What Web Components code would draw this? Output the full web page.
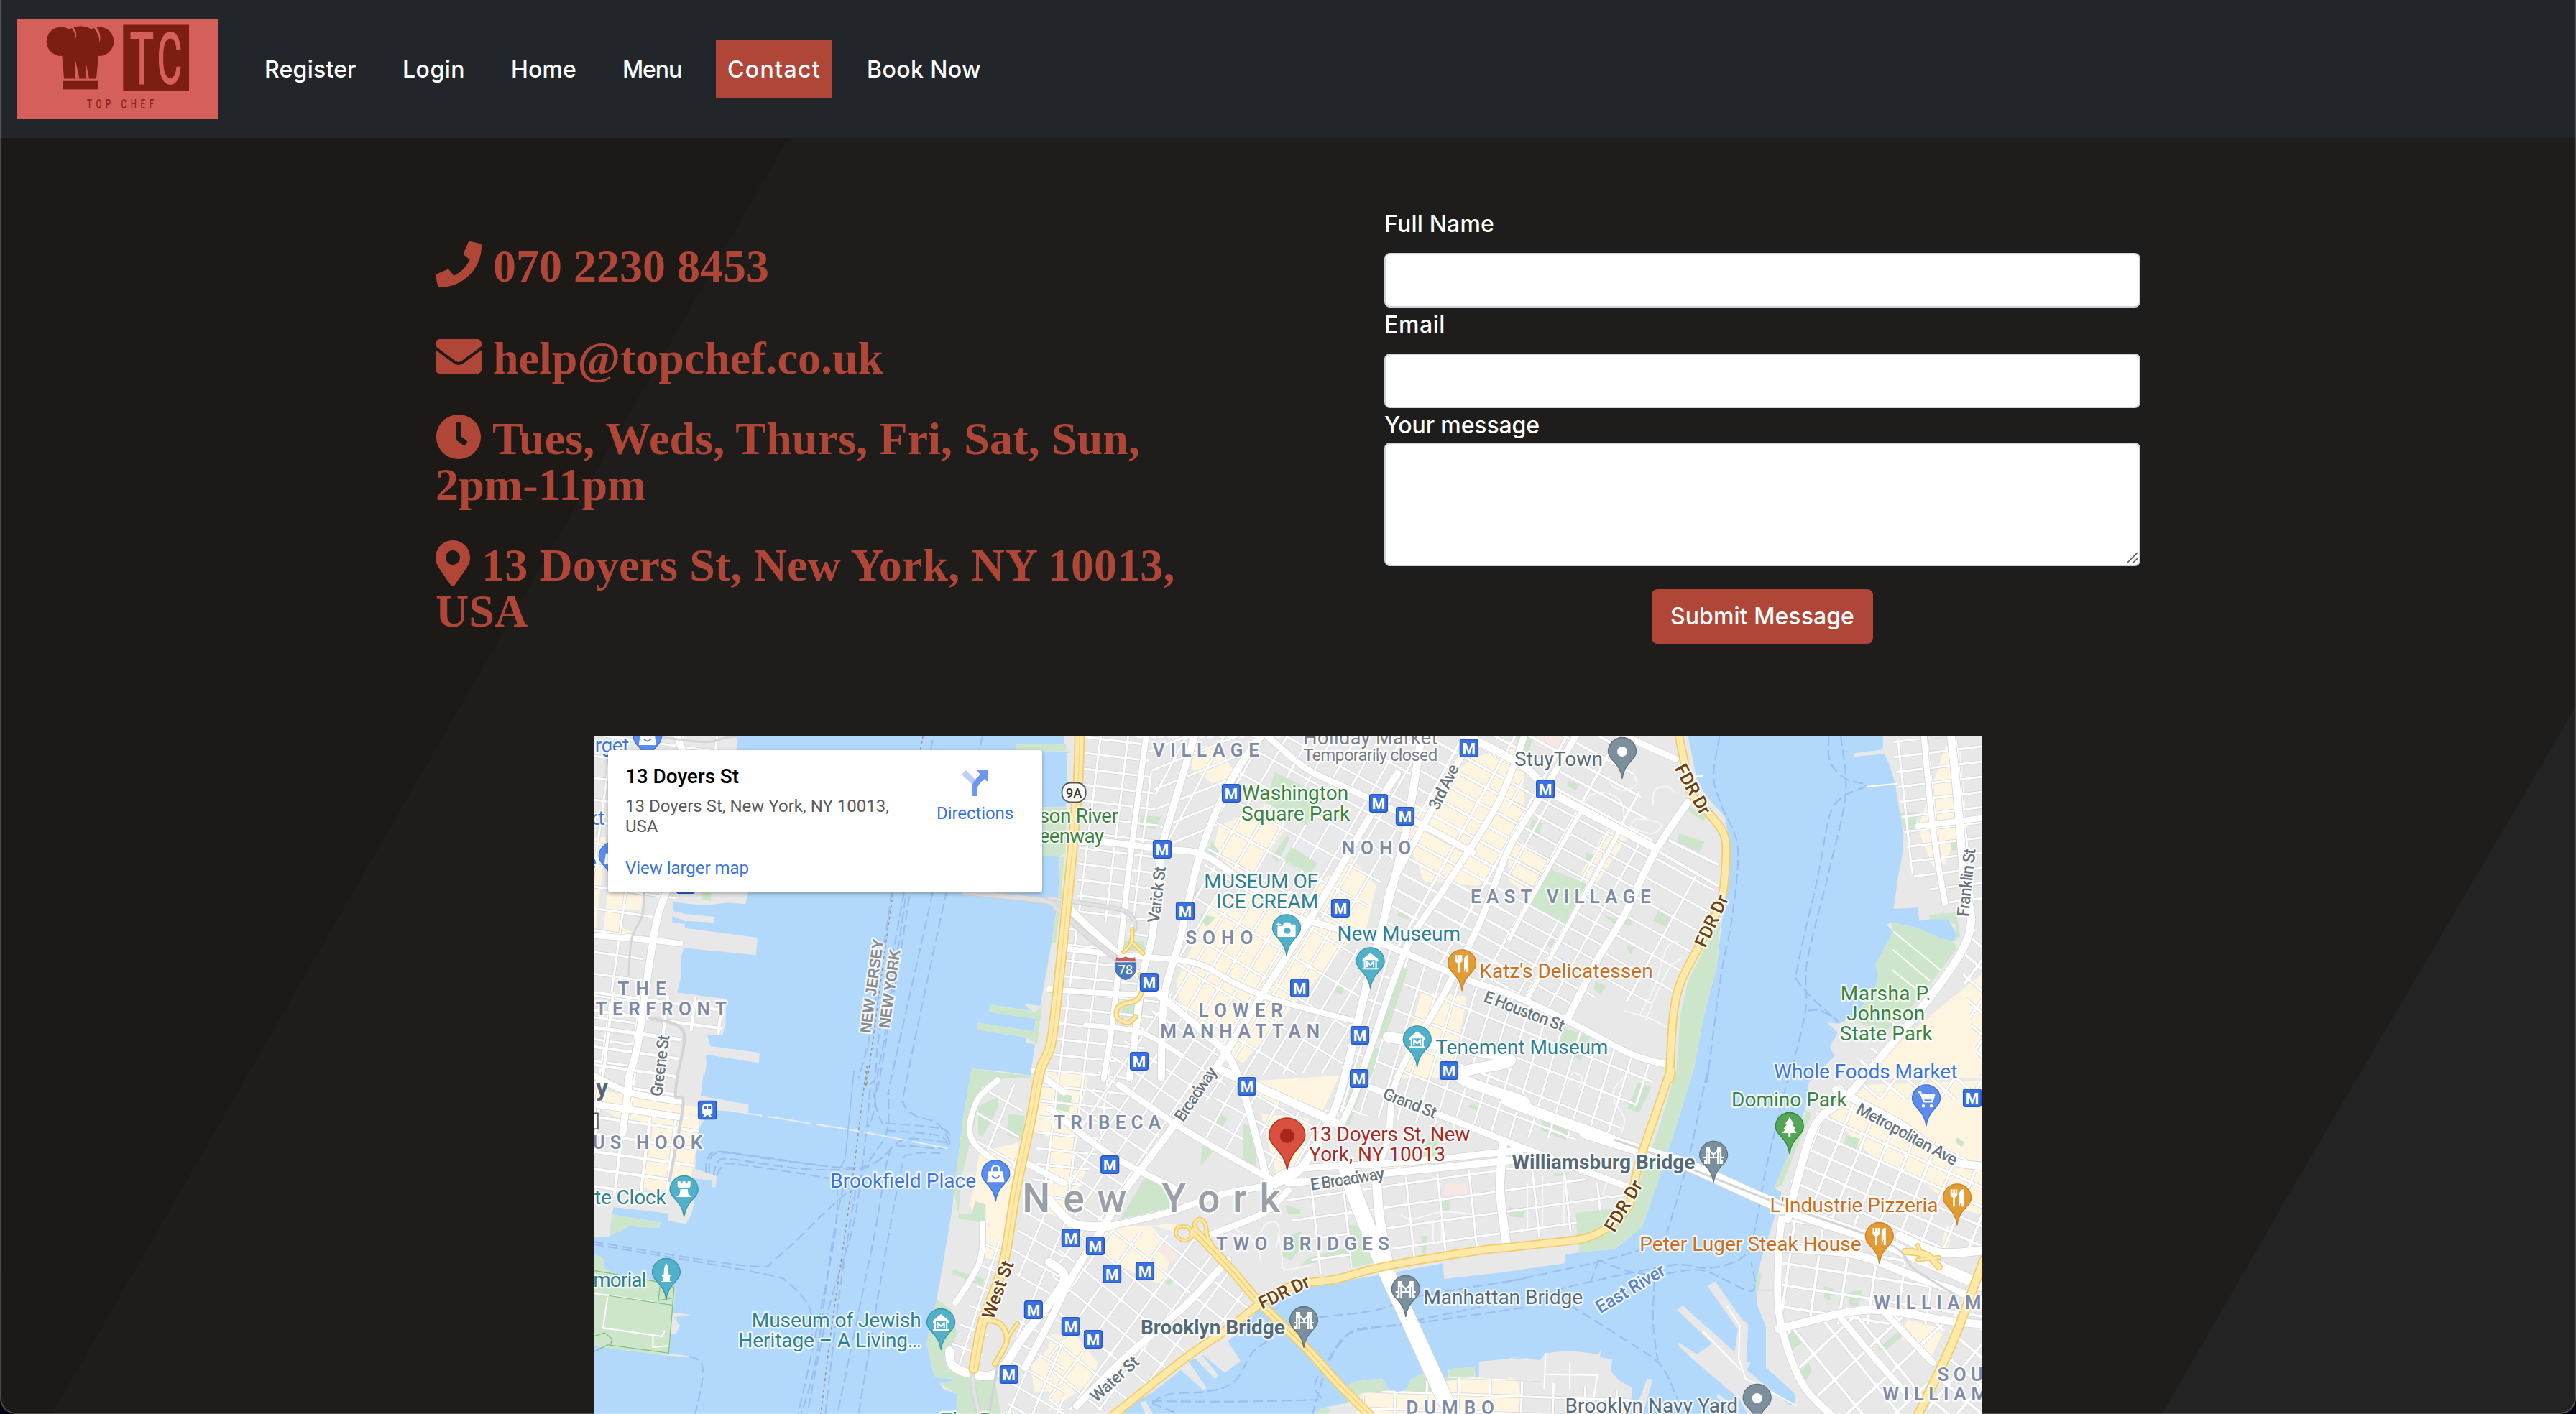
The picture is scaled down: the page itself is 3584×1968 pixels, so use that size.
<!DOCTYPE html>
<html lang="en">
<head>
<meta charset="utf-8">
<title>Top Chef - Contact</title>
<style>
html,body{margin:0;padding:0}
body{width:3584px;height:1968px;overflow:hidden;background:#05001a;font:500 32px/48px Inter,"Noto Sans",sans-serif;color:#fff}
</style>
</head>
<body>
<contact-page></contact-page>
<script>
const make=(tag,html,init)=>customElements.define(tag,class extends HTMLElement{
  connectedCallback(){
    if(this.shadowRoot)return;
    const r=this.attachShadow({mode:'open'});
    r.innerHTML=typeof html==='function'?html(this):html;
    if(init)init(this,r);
  }
});

/* Text whose tracking is adjusted so that it fills a given width */
make('fit-text','<style>:host{display:inline-block;white-space:nowrap}</style><span><slot></slot></span>',(el,r)=>{
  const s=r.querySelector('span'),w=s.getBoundingClientRect().width,n=el.textContent.length;
  s.style.letterSpacing=((+el.getAttribute('w')-w)/n)+'px';
  el.style.width=el.getAttribute('w')+'px';
});

make('brand-logo',`<style>:host{display:block;width:280px;height:140px;background:#d5605b}svg{display:block}</style>
<svg width="280" height="140" viewBox="24 26 280 140">
<g fill="#7d1e12"><circle cx="85" cy="57.700" r="20.300"/><circle cx="138" cy="57.700" r="20.300"/>
<path d="M84 44 L100 39 Q112 33.500 124 39 Q140 47 140 62 L137 78 L134 109.500 L89 109.500 L86.500 78 Z"/>
<rect x="87" y="112.700" width="49" height="11.700"/><rect x="171.300" y="34.500" width="91.700" height="91.500"/></g>
<g fill="#d5605b"><path d="M99.500 38.500Q105.500 46 105.300 55Q108 45 102.500 38Z"/><path d="M130 38Q138.500 48 138.800 60Q141.500 46 134 37.500Z"/><path d="M97 38.500L100.300 39.300L102 36.500L98 36Z"/>
<path d="M105 84V109.500H110.500Z"/><path d="M119.300 86V109.500H124Z"/></g>
<g fill="#d5605b" font-family="Roboto,sans-serif" font-weight="400" stroke="#d5605b" stroke-width="2"><text transform="translate(180.800 116.500) scale(.55 1)" font-size="101">T</text><text transform="translate(218.500 116) scale(.54 1)" font-size="99">C</text></g>
<text transform="translate(121 150.500) scale(.62 1)" font-family="Roboto,sans-serif" font-size="18.500" fill="#8d271d" textLength="150">TOP CHEF</text></svg>`);

make('nav-link',el=>`<style>:host{display:flex;justify-content:center;padding:17px 16px 15px;height:48px;box-sizing:content-box;background:${el.hasAttribute('active')?'#b04637':'transparent'};color:#fff}</style><slot></slot>`);

make('top-nav',`<style>:host{display:flex;align-items:center;height:192px;background:#22262b;padding-left:24px;box-sizing:border-box}
nav{display:flex;gap:32px;margin-left:48px}</style>
<brand-logo></brand-logo><nav>
<nav-link><fit-text w="128">Register</fit-text></nav-link><nav-link><fit-text w="87">Login</fit-text></nav-link><nav-link><fit-text w="91">Home</fit-text></nav-link><nav-link><fit-text w="82">Menu</fit-text></nav-link><nav-link active><fit-text w="130">Contact</fit-text></nav-link><nav-link><fit-text w="159">Book Now</fit-text></nav-link></nav>`);

const ICON={
 phone:['0 0 512 512','M493.4 24.6l-104-24c-11.3-2.6-22.9 3.3-27.5 13.9l-48 112c-4.2 9.8-1.4 21.3 6.9 28l60.6 49.600c-36 76.700-98.900 140.500-177.200 177.200l-49.600-60.600c-6.800-8.300-18.200-11.100-28-6.900l-112 48C3.900 366.500-2 378.100.6 389.400l24 104C27.100 504.200 36.700 512 48 512c256.100 0 464-207.500 464-464 0-11.200-7.700-20.900-18.600-23.400z'],
 mail:['0 0 512 512','M502.300 190.800c3.900-3.100 9.700-.2 9.700 4.700V400c0 26.500-21.500 48-48 48H48c-26.500 0-48-21.500-48-48V195.600c0-5 5.700-7.800 9.700-4.700 22.400 17.400 52.100 39.500 154.100 113.600 21.100 15.400 56.700 47.800 92.200 47.600 35.700.3 72-32.800 92.300-47.600 102-74.100 131.600-96.300 154-113.700zM256 320c23.200.4 56.600-29.200 73.400-41.400 132.700-96.300 142.800-104.700 173.400-128.700 5.800-4.500 9.200-11.500 9.200-18.900v-19c0-26.500-21.500-48-48-48H48c-26.500 0-48 21.500-48 48v19c0 7.400 3.400 14.300 9.200 18.900 30.600 23.900 40.700 32.400 173.400 128.700 16.800 12.200 50.200 41.800 73.400 41.400z'],
 clock:['0 0 512 512','M256,8C119,8,8,119,8,256S119,504,256,504,504,393,504,256,393,8,256,8Zm92.490,313h0l-20,25a16,16,0,0,1-22.490,2.500h0l-67-49.720a40,40,0,0,1-15-31.230V112a16,16,0,0,1,16-16h32a16,16,0,0,1,16,16V256l58,42.500A16,16,0,0,1,348.490,321Z'],
 pin:['0 0 384 512','M172.268 501.670C26.970 291.031 0 269.413 0 192 0 85.961 85.961 0 192 0s192 85.961 192 192c0 77.413-26.970 99.031-172.268 309.670-9.535 13.774-29.930 13.773-39.464 0zM192 272c44.183 0 80-35.817 80-80s-35.817-80-80-80-80 35.817-80 80 35.817 80 80 80z']};
make('contact-line',el=>{const i=ICON[el.getAttribute('icon')];return `<style>:host{display:block;font:700 64px/64px "Liberation Serif","Times New Roman",serif;color:#b04637;letter-spacing:${el.getAttribute('track')||0}px}
svg{height:64px;width:${i[0].startsWith('0 0 384')?48:64}px;vertical-align:-8px;margin-top:-4px;fill:currentColor}</style><svg viewBox="${i[0]}"><path d="${i[1]}"/></svg> <slot></slot>`});

make('form-field',el=>`<style>:host{display:block}label{display:block;height:48px;margin-bottom:${el.hasAttribute('area')?0:16}px}
.box{position:relative;box-sizing:border-box;background:#fff;border:2px solid #ced4da;border-radius:8px;height:${el.hasAttribute('area')?172:76}px}
svg{position:absolute;right:0;bottom:1px}</style><label><slot></slot></label><div class="box">${el.hasAttribute('area')?'<svg width="18" height="18" fill="none" stroke="#555" stroke-width="1.600"><path d="M2 16L16 2M10 16L16 10"/></svg>':''}</div>`);

make('submit-button',`<style>:host{display:flex;align-items:center;justify-content:center;width:308px;height:76px;border-radius:8px;background:#b04637;color:#fff}</style><slot></slot>`);

/* ---------- Map ---------- */
const ORG={A:[820,1020],B:[1460,1020],C:[2100,1020],D:[820,1490],E:[1460,1490],F:[2100,1490]};
const KX=660/1568,pt=(t,x,y)=>[ORG[t][0]+x*KX-826,ORG[t][1]+y/3-1024];
const parse=s=>{let t='A';return s.trim().split(/\s+/).map(k=>{if(/[A-F]/.test(k[0])){t=k[0];k=k.slice(1)}const[x,y]=k.split(',').map(Number);return pt(t,x,y)})};
const f=n=>n.toFixed(1);
const poly=s=>'M'+parse(s).map(p=>f(p[0])+' '+f(p[1])).join('L');
const curve=s=>{const p=parse(s);let d='M'+f(p[0][0])+' '+f(p[0][1]);
 for(let i=0;i<p.length-1;i++){const a=p[i-1]||p[i],b=p[i],c=p[i+1],e=p[i+2]||c;
  d+=`C${f(b[0]+(c[0]-a[0])/6)} ${f(b[1]+(c[1]-a[1])/6)} ${f(c[0]-(e[0]-b[0])/6)} ${f(c[1]-(e[1]-b[1])/6)} ${f(c[0])} ${f(c[1])}`}return d};
const area=(s,c,o='')=>`<path d="${poly(s)}Z" fill="${c}" ${o}/>`;

const LAND=[
'A14,12 490,12 487,72 525,666 516,715 460,709 380,720 310,712 278,706 278,745 318,756 412,768 410,792 316,785 274,765 274,792 316,798 316,815 556,855 551,928 312,898 302,940 303,1020 290,1084 400,1103 452,1110 450,1220 440,1262 390,1262 400,1308 563,1336 560,1378 385,1343 387,1385 380,1440 D378,0 368,105 526,142 526,173 400,165 380,205 362,240 350,410 420,440 418,487 405,485 405,460 345,450 345,560 337,600 320,640 258,628 262,597 80,570 75,600 235,635 230,658 130,650 65,692 14,695',
'D14,768 45,780 50,825 85,850 200,870 285,905 277,1010 340,1020 280,1030 300,1065 285,1100 268,1100 262,1180 328,1192 326,1197 235,1187 14,1150',
'A1568,12 1568,48 1410,48 1410,74 B80,78 58,85 58,240 55,308 A1500,310 1500,515 1555,517 1550,680 1530,860 1490,1140 1435,1130 1460,1160 1325,1135 1320,1165 1475,1195 1470,1248 1285,1210 1282,1240 1445,1272 1445,1295 1473,1300 1458,1430 1360,1412 1265,1402 1260,1440 D1262,0 1235,200 1205,500 1200,575 1170,800 1145,975 1130,1050 1115,1140 1140,1280 1220,1290 1158,1305 1170,1330 1215,1350 1220,1440 E200,1440 260,1400 340,1345 435,1250 510,1335 520,1325 460,1215 480,1200 548,1288 560,1275 500,1180 580,1262 632,1212 590,1130 640,1075 700,985 850,905 1130,845 1300,805 1305,870 1568,832 F0,838 185,805 185,768 230,760 350,745 440,650 500,430 560,200 608,0 C604,1440 640,1200 650,1150 685,980 720,600 730,480 712,350 655,270 620,200 600,70 590,12 B85,12',
'C1235,12 1235,70 1138,85 1138,100 1240,88 1255,130 1275,210 1290,330 1303,420 1300,500 1285,600 1270,735 1350,730 1355,785 1390,778 1450,778 1478,840 1470,872 1430,860 1350,815 1260,790 1247,800 1268,830 1210,970 1220,1010 1205,1080 1140,1180 1090,1215 1050,1210 1085,1250 1060,1310 1075,1350 1010,1430 F990,50 980,150 930,330 875,490 900,510 870,640 830,800 815,900 820,980 848,1070 848,1240 945,1350 945,1400 925,1395 785,1250 797,1220 783,1215 790,1060 770,1040 680,880 655,900 755,1080 745,1175 572,980 555,1000 670,1140 620,1185 560,1135 560,1150 620,1220 760,1370 790,1440 1568,1440 C1568,12',
'F0,1440 0,1205 60,1200 100,1210 120,1180 200,1170 296,1185 302,1165 300,1198 340,1205 335,1255 360,1290 405,1325 400,1440 E870,1440 900,1410 990,1385 970,1350 1000,1300 1100,1285 1120,1330 1150,1342 1180,1335 1195,1290 1240,1260 1315,1285 1320,1245 1405,1238 1408,1285 1420,1280 1420,1215 1568,1198 F0,1200',
'F455,1287 473,1290 440,1440 410,1440','E300,1385 318,1380 345,1440 320,1440','F690,1350 740,1400 730,1415 685,1365'];

const PARK=['A1410,48 B55,48 55,76 A1410,74','A1500,310 B58,310 52,500 35,518 A1500,515','B48,518 36,518 30,700 5,880 20,880 40,700','A1325,1135 1475,1165 1495,1140 1530,860 B5,860 A1480,1300 1445,1272 1282,1240 1285,1210 1470,1248 1475,1195 1320,1165','D1262,0 1460,20 1360,35 1290,120 1260,290 1230,450 1220,600 1205,500 1235,200','A1265,1402 1460,1435 1455,1440 1260,1440','D1275,545 1310,560 1310,640 1220,615 1220,595 1265,600','D1285,150 1350,110 1350,160 1300,275 1285,270','D1385,180 1440,190 1430,290 1380,270','D1145,955 1200,1000 1215,1100 1190,1180 1240,1270 1340,1290 1360,1434 1220,1434 1215,1350 1158,1305 1220,1290 1140,1280 1115,1140','D1200,830 1305,870 1300,900 1200,850','D14,768 45,780 50,825 85,850 200,870 285,905 262,1180 235,1187 14,1150','D75,600 235,635 230,658 130,650 65,692','D380,205 450,215 448,260 432,262 425,230 380,220','A370,666 402,666 402,703 370,695',
'B745,165 910,265 850,385 715,290','B300,345 370,350 350,402 300,395','B785,430 735,520 755,540 795,440','B800,475 885,545 860,590 775,535','B535,455 560,490 545,515 525,505','B485,650 500,650 475,700','B500,755 550,770 520,810 500,780','B245,870 310,870 320,910 250,910','B240,1130 290,1130 280,1180 240,1190','B1160,970 1185,990 1110,1270 1085,1275','B1055,1310 1090,1320 1065,1440 1040,1440','E1000,60 1040,60 990,230 960,230','B1175,925 1300,970 1290,985 1175,945','B1155,740 1195,760 1190,780 1150,765','B940,1060 975,1060 970,1090 940,1085',
'C135,570 255,630 185,800 70,715','C560,420 645,455 628,500 555,455','C590,300 650,350 640,370 590,325','C500,730 540,760 525,815 475,785','C75,360 110,380 90,445 65,410','C255,500 290,510 275,545 250,530','C195,200 230,215 220,240 190,220','C25,12 80,12 60,90 30,70','C385,890 415,895 400,925','C285,1035 320,1060 300,1090 280,1070','C180,1230 265,1270 235,1370 165,1300','C130,855 155,870 140,900 125,890','C310,760 340,770 370,780 410,760 405,805 350,800','C645,900 700,760 685,980 650,1150 640,1200 604,1440 550,1440 565,1180 590,1040','F550,0 608,0 560,200 500,430 440,650 350,745 230,760 230,720 340,670 400,580 440,430 500,220','F110,205 200,240 190,290 105,250','F425,50 470,70 430,175 390,160','F220,595 345,575 300,680 225,700','F150,430 200,425 190,440 145,440',
'E325,428 410,480 400,570 235,620','E640,225 695,240 690,310 680,400 640,370','E505,295 540,340 500,400','E20,95 75,105 65,175 15,160','E560,175 590,200 570,240 545,220','E990,645 1040,650 1085,800 1000,820','E770,700 830,670 845,720 800,790 770,780','E860,780 980,740 985,770 830,815','E1240,320 1280,220 1290,380 1220,390','E1230,690 1250,690 1245,760 1230,765','E1290,540 1325,545 1320,590 1290,590','E1520,570 1568,580 1568,615 1520,610','E780,560 830,580 830,600 790,600','E1400,138 1425,160 1420,170 1380,150','E30,845 70,880 50,885 20,865','E410,860 400,900 380,885','E970,1350 1000,1300 1100,1285 1120,1330 1150,1342 1180,1335 1195,1290 1240,1260 1320,1285 1320,1245 1405,1238 1405,1275 1300,1300 1290,1350 1030,1345 1000,1380','E870,1434 890,1400 930,1415 920,1434',
'C1290,335 1345,330 1345,400 1305,405','C1460,450 1500,445 1495,490 1460,490','C1390,760 1478,750 1490,850 1470,872 1475,800 1440,780 1390,778','C1260,790 1350,815 1430,860 1470,872 1480,900 1420,1000 1350,1120 1250,1240 1170,1220 1140,1180 1205,1080 1220,1010 1210,970 1268,830','F970,160 1000,180 960,290 900,480 875,490 930,330 980,180','F1115,270 1160,285 1140,340 1105,320','F1480,280 1505,300 1495,320 1475,300','F1130,920 1165,920 1155,985 1120,980','F1040,900 1070,910 1060,960 1040,950','F1285,1090 1300,1110 1240,1170 1215,1165','F1335,700 1385,740 1360,750 1320,730','F918,1090 955,1085 965,1140 935,1165 915,1130','F990,1220 1000,1260 970,1310 955,1260','F815,845 835,845 825,915 885,915 885,920 815,920'];

const CREAM=['A14,440 55,435 20,840 14,840','A60,670 175,670 170,740 110,735 100,810 140,830 130,850 45,830','A180,666 255,666 230,690 180,680','D14,80 120,100 210,120 380,160 362,240 345,390 330,470 220,510 170,480 200,330 210,230 110,210 14,140','D1290,340 1420,300 1400,550 1350,790 1290,780 1300,640 1255,560 1270,500','B480,50 560,60 620,180 540,210 470,150','B560,390 720,300 780,400 660,620 540,500','B540,700 720,640 1000,860 640,1380 440,1200 420,1040','B880,640 1000,520 1080,640 1040,860 910,790','B1160,380 1400,100 1568,60 1568,400 1420,640 1240,620','C0,420 130,520 70,680 0,620','C330,380 400,420 250,700 220,620','C1440,60 1490,60 1510,350 1560,360 1480,420 1440,550 1400,560 1350,400','C1440,1130 1568,1000 1568,1440 1200,1440 1230,1360','B1230,1080 1380,1100 1330,1440 1150,1440','E0,0 130,0 100,200 60,620 0,600','E0,380 120,420 60,600 0,560','E150,660 420,640 380,900 200,800','E700,180 860,200 820,460 750,430','E1090,385 1200,375 1195,410 1095,420','E0,1100 90,1110 160,1220 140,1300 0,1420','E600,50 960,20 900,180 720,130','D1460,1230 1568,1100 1568,1340 1470,1340','F1060,190 1180,60 1568,40 1568,600 1480,580 1340,440 1200,360','F1320,1040 1440,1080 1390,1210 1280,1100','E1030,1350 1350,1270 1550,1300 1568,1440 1010,1440','F0,1280 25,1290 20,1434 0,1434','F1440,650 1470,650 1450,740 1430,740','D1480,0 1568,0 1568,300 1460,250'];

let clipN=0;
function grid(clip,ang1,gap1,ang2,gap2,w=3){
 const p=parse(clip),id='g'+clipN++,cx=p.reduce((a,b)=>a+b[0],0)/p.length,cy=p.reduce((a,b)=>a+b[1],0)/p.length;
 const R=Math.max(...p.map(q=>Math.hypot(q[0]-cx,q[1]-cy)));let d='';
 for(const[a,g]of[[ang1,gap1],[ang2,gap2]]){const c=Math.cos(a*Math.PI/180),s=Math.sin(a*Math.PI/180);
  for(let k=-Math.ceil(R/g);k<=R/g;k++){const ox=cx-s*g*k,oy=cy+c*g*k;d+=`M${f(ox-c*R)} ${f(oy-s*R)}L${f(ox+c*R)} ${f(oy+s*R)}`}}
 return `<clipPath id="${id}"><path d="${poly(clip)}Z"/></clipPath><g clip-path="url(#${id})" fill="none"><path d="${d}" stroke="#d6d7da" stroke-width="${w+1.6}"/><path d="${d}" stroke="#fff" stroke-width="${w}"/></g>`}

const GRIDS=[
 ['A14,12 487,12 487,72 300,666 180,880 165,1300 D140,200 14,200',8,30,98,48],
 ['A14,1080 160,1090 440,1110 440,1262 300,1240 A290,1440 D280,110 14,50',8,25,97,38,4],
 ['D14,130 370,190 340,460 180,560 14,500',8,24,97,36,4],
 ['B110,12 320,12 370,500 330,880 90,740 100,450',7,22,97,38],
 ['B320,12 690,12 510,500 380,500',-22,26,118,46],
 ['B700,12 1230,12 1170,440 1000,850 520,500 600,200',29,38,120,28],
 ['B1230,12 1568,12 C380,12 480,480 190,1200 B1100,870 1150,500',28.6,23,119,63,3.6],
 ['B520,520 1000,850 1060,1000 960,1420 640,1430 350,1060 430,870',31,46,121,23],
 ['B60,760 250,930 380,1080 280,1440 E60,600 D1460,520 1500,0 B10,1300',6,22,97,34],
 ['B1060,900 1180,900 C190,1200 510,1390 F340,290 E1520,280 950,170 B1060,1000',21.5,38,107,26],
 ['B280,1240 400,1080 640,1440 E580,60 400,260 180,640 60,600 100,100',34,28,124,31],
 ['E640,60 960,180 900,380 750,450 460,240 570,80',29,31,119,32],
 ['C480,480 240,320 0,170 0,1070 190,1200 380,760',28.6,23,119,46],
 ['C480,500 680,640 660,760 560,1040 540,1140 250,1100 380,760',29,30,119,90],
 ['E780,500 1568,390 F400,500 300,650 0,720 E1100,800 890,850 790,600',-8,29,84,44],
 ['E60,640 200,660 480,700 690,960 220,1420 0,1420 0,900',39,34,126,33],
 ['D1480,520 1568,600 1568,1434 1380,1434 1400,1180 1440,900 1370,780',30,27,113,31],
 ['D1320,640 1400,800 1290,1220 1220,1240 1190,1170 1280,900',22,29,108,46],
 ['D1300,60 1440,60 1400,500 1260,290',30,34,112,42],
 ['C1270,30 1568,12 1568,740 1440,710 1330,590 1290,300',-7,21,84,40,3],
 ['C1480,860 1568,800 1568,1440 1180,1440 1300,1160 F1050,120 1568,120',41,23,126,33,3.6],
 ['F1000,190 1100,100 1568,390 1568,760 1330,740 900,560 950,400',24,25,112,32,3.6],
 ['F890,600 1300,780 1320,840 1568,950 1568,1060 900,1060 890,760',9,30,98,40,3.6],
 ['F910,1080 1180,1000 1440,1060 1350,1434 1050,1434 940,1250',51,40,137,46,4],
 ['F1460,1060 1568,1050 1568,1434 1380,1434',40,30,130,36,4],
 ['E1030,1360 1300,1280 1568,1290 F400,1340 400,1434 E1000,1434',2,24,92,44],
];

const ROADS=[
 [9,'B100,455 180,455 370,485 510,510 660,640 800,760 930,810 1100,880 1250,960 1400,1040 C0,1090 190,1200 400,1340 520,1385'],
 [8,'B320,12 290,300 260,600 235,900 210,1200 180,1440'],[10,'B480,12 400,350 370,500 340,850 310,1000 280,1300 265,1440'],
 [10,'B700,12 600,200 500,500 430,870 380,1100 370,1440'],[10,'B1150,170 1050,370 880,740 720,1060 560,1380 E400,250 250,500 180,650 80,850 0,1050 D1440,1240'],
 [11,'B1230,12 1180,400 1110,760 1040,1100 980,1420 E930,200 830,410 750,470'],[9,'B1400,12 1230,400 1130,640 1110,760'],
 [9,'C50,12 B1480,300 1310,640 1180,900 1060,1320 E1010,100 960,240'],[9,'C220,12 100,270 0,480 B1420,800 1300,1100 1150,1440 E1120,280 1080,420'],
 [6,'C240,320 150,520 50,740 0,860'],[10,'C590,290 480,500 380,760 290,950 190,1200'],[6,'C360,420 230,720 60,1110'],
 [11,'B1380,12 1568,140 C130,240 240,320 480,480'],[9,'C380,12 550,110'],[9,'B720,12 850,150 1000,240 1150,330 1400,500'],
 [10,'B70,740 230,930 350,1080 500,1240 620,1420 E740,560'],[8,'B40,900 260,930 480,960 620,1050 760,1120 1000,1200'],
 [8,'B0,1070 220,1090 380,1090'],[7,'B120,1220 300,1250 440,1350'],
 [9,'E0,160 200,350 410,490'],[9,'E230,60 450,250 740,460'],[9,'E740,460 830,410 1200,380 1568,330'],[10,'E790,470 1100,430 1568,370'],
 [9,'E200,650 400,590 560,520 750,475'],[12,'E200,650 80,640 0,540'],[9,'E500,700 700,600 790,500'],[10,'E590,790 450,980 250,1200 90,1400'],
 [12,'E570,0 900,190 960,230'],[15,'B1120,1270 C0,1360 E1350,20 1568,130 F0,130 340,290'],[9,'E1060,70 1300,190 1520,300 F60,330 400,490'],[12,'E1500,300 1490,500 1510,720'],
 [22,'E980,400 1010,520 1100,800 1180,1020 1310,1380'],[13,'E1080,390 1090,600 1120,800'],
 [16,'F250,260 500,360 600,400 900,570 1200,700 1330,770 1568,900'],[10,'F900,620 890,760 890,1000 930,1200 980,1330 1060,1434'],[11,'F920,620 960,420 1020,210 1150,60 C1500,900 1500,600 1480,260 1460,12'],
 [8,'C1370,12 1400,400 1440,710'],[8,'C1350,390 1568,355'],[11,'F1080,80 1300,230 1450,370 1568,400'],[11,'F890,740 1100,760 1200,790 1340,860 1568,960'],
 [11,'F890,1080 1180,1000 1450,1045 1568,1060'],[9,'F1100,1040 1200,1190 1320,1360'],[9,'F1240,1010 1400,1220'],[12,'F1290,690 1420,760 1568,750'],
 [10,'A290,12 330,200 300,500 230,750 200,950 160,1300 130,1440 D130,60 110,260'],[8,'A14,845 200,865 300,880'],[9,'D14,20 130,90 300,130'],[9,'D14,140 300,195'],
 [8,'D1350,40 1280,130 1265,290 1400,430'],[8,'D1300,640 1290,800 1210,970'],[12,'D1190,1170 1200,1230 1260,1265 1350,1260 1440,1100 1568,880 E0,800'],[9,'D1470,0 1568,90'],[9,'D1450,390 1568,470'],[5,'A14,1230 300,1280'],[4,'C530,450 690,550'],[4,'C500,500 690,640']];
const YELLOW=[[13,'B100,12 95,200 75,500 55,750 30,1050 5,1300 D1490,0 1460,200 1410,500 1375,770 1345,900 1300,1050 1270,1245'],[7,'D1310,1040 1360,1060 1380,1130 1340,1225'],[5,'D1415,1055 1380,1120'],
 [11,'C560,12 580,130 600,250 655,330 708,420 716,520 700,700 640,860 570,1030 545,1150 535,1300 530,1440 F533,0 500,120 430,380 395,560 330,650 250,700 130,720 0,738 E1400,755 1100,820 950,870 800,900 690,980 600,1070 450,1200 210,1440'],
 [12,'E480,670 600,830 700,975 850,1160 950,1300 1060,1440'],[4,'E485,680 450,710 420,690 425,655 460,655 470,690'],[5,'E485,660 480,640 495,620 515,640 525,700 560,770'],
 [12,'F1568,790 1530,920 1460,1150 1350,1440'],[6,'B300,1010 310,1060 290,1115 250,1130 225,1150 225,1190 260,1210 285,1185'],[5,'B275,820 270,880 245,915'],[5,'B270,870 310,920'],[9,'F1310,755 1380,770 1420,820'],[5,'F1420,780 1350,790'],[5,'F1350,730 1365,780']];
const GREYRD=[[9,'A1240,666 1500,700 B30,740 120,840 220,940'],[7,'B0,690 130,715 240,740 280,780 282,820'],[8,'D1265,1250 1270,1330 1290,1440'],[4,'D1350,1230 1320,1440'],[3,'A200,12 380,38 450,20 500,12'],[3,'A180,666 175,760 140,860 130,1010'],[4,'A200,1190 310,1245 290,1440 D285,110 310,140 265,460'],[3,'F350,290 480,350 900,560 1250,720 1330,820 1400,880 1480,940']];
const FERRY=['A1160,12 1130,60 1060,666 960,1440 D940,100 960,200 980,240','A1300,12 1180,666 1050,1440 D1040,140 1080,190 1150,220 1190,300 1160,325 1040,315 990,350 940,700 820,1434',
 'A1000,666 930,1240 890,1440','A1040,666 960,1240 945,1440 D930,60 920,200 900,420 870,660 790,1000 720,1434','A1045,690 980,1240 D955,0 940,170 920,240','A1135,666 1000,1430 D990,100 985,250 940,350 900,420',
 'D385,430 390,370 430,338 600,370 850,405 950,380 1040,288 1180,300','D410,440 425,380 470,370 700,410 890,410 940,390','D420,440 440,400 480,390 700,430 790,450','D395,430 410,350 500,350 760,395','D14,715 520,815 620,780 780,590 860,500','D14,725 560,845 660,890 730,1000 735,1150','D820,480 810,700 740,1150 690,1434','D840,480 800,740 750,1200 700,1434','D880,500 830,900 780,1434','D1160,345 1060,350 1030,420 960,900 890,1434','D980,220 1170,245 1190,310','D980,250 1150,270 1185,310','D330,1192 370,1220 372,1300 350,1434',
 'C695,12 675,180 700,300 755,480 735,780 700,1010 655,1440 F655,0 590,380 520,680','C1055,12 1060,120 1110,190 1180,220 1110,260 1060,340 1020,600 955,960 960,1050 1085,1205','C1095,12 1112,250 1060,560 985,950 980,1150 940,1370 F920,40 850,400 800,720 740,800 650,825 560,810 420,840 240,890 0,960 E1150,1060 990,1100 920,1230 870,1434','E1568,990 1180,1060 1020,1080 960,1140 880,1300 900,1370','F0,880 290,800 430,750','F290,790 400,840 500,850 640,835 800,920 800,800','F295,790 270,880','F200,980 390,1130 500,1230 555,1370','F480,880 475,1050 490,1210','E890,1030 1080,1000 1230,940 1568,870','E720,1130 670,1180 610,1300 520,1340 400,1350 340,1385','E340,1380 600,1382 890,1375','E340,1390 420,1430','C985,1160 1030,1160 1085,1200'];

/* [start, end, baseline] labels */
const T=[];const txt=(t,x0,x1,y,s,c,sz=28,wt=400)=>{const p=pt(t,x0,y),w=(x1-x0)*KX+(wt===500?3:1);T.push(`<text x="${f(p[0]-1.5)}" y="${f(p[1])}" ${s.length>1?`textLength="${f(w)}"`:''} fill="${c}" font-size="${sz}" font-weight="${wt===500?600:wt}">${s}</text>`)};
const TEAL='#2f8190',GRN='#3b8440',ORA='#cb7022',SL='#5a6b78',BL='#3c74e2',DI='#7f8ba6';
txt('B',640,990,280,'Washington',GRN);txt('B',638,995,365,'Square Park',GRN);
txt('A',1490,1750,375,'son River',GRN);txt('A',1490,1702,458,'eenway',GRN);
txt('B',515,890,647,'MUSEUM OF',TEAL);txt('B',555,890,731,'ICE CREAM',TEAL);txt('B',955,1360,868,'New Museum',TEAL);
txt('B',1425,1996,1022,"Katz's Delicatessen",ORA);txt('B',1280,1848,1340,'Tenement Museum',TEAL);
txt('B',843,1285,47,'Holiday Market','#7a7e86',27);txt('B',843,1285,117,'Temporarily closed','#7a7e86',24);
txt('C',20,310,137,'StuyTown',SL);txt('C',1098,1395,1115,'Marsha P.',GRN);txt('C',1118,1375,1199,'Johnson',GRN);txt('C',1096,1400,1283,'State Park',GRN);
txt('F',878,1482,32,'Whole Foods Market',BL);txt('F',738,1117,150,'Domino Park',GRN);
txt('F',12,615,412,'Williamsburg Bridge','#546a76',28,700);txt('E',305,780,1102,'Brooklyn Bridge','#546a76',28,700);
txt('E',1240,1764,975,'Manhattan Bridge',SL);txt('F',865,1418,590,"L'Industrie Pizzeria",ORA);txt('F',434,1164,752,'Peter Luger Steak House',ORA);
txt('F',188,757,1427,'Brooklyn Navy Yard',SL);txt('D',800,1280,490,'Brookfield Place',BL);
txt('D',540,1098,1070,'Museum of Jewish',TEAL);txt('D',496,1098,1155,'Heritage – A Living…',TEAL);
txt('D',20,255,557,'te Clock',TEAL);txt('D',16,190,902,'morial',TEAL);
txt('A',22,132,82,'rget',BL);txt('A',10,52,385,'ot',BL);txt('A',-8,16,568,'e',BL);
txt('E',862,1392,293,'13 Doyers St, New','#a82a24');txt('E',862,1310,377,'York, NY 10013','#a82a24');
txt('D',25,68,105,'y','#5b6372',34,700);
txt('B',280,760,14,'GREENWICH',DI,26,500);txt('B',345,690,98,'VILLAGE',DI,26,500);txt('B',970,1192,508,'NOHO',DI,26,500);txt('B',1396,1985,710,'EAST VILLAGE',DI,26,500);
txt('B',453,670,883,'SOHO',DI,26,500);txt('B',497,768,1186,'LOWER',DI,26,500);txt('B',370,890,1271,'MANHATTAN',DI,26,500);
txt('E',18,365,242,'TRIBECA',DI,26,500);txt('E',555,1120,751,'TWO BRIDGES',DI,26,500);txt('E',1183,1467,1434,'DUMBO',DI,26,500);
txt('A',97,250,1094,'THE',DI,26,500);txt('A',24,450,1178,'TERFRONT',DI,26,500);txt('D',14,370,328,'US HOOK',DI,26,500);
txt('F',1208,1556,995,'WILLIAM',DI,26,500);txt('F',1418,1562,1295,'SOU',DI,26,500);txt('F',1237,1576,1378,'WILLIAM',DI,26,500);
txt('D',1165,1500,1488,'The Battery',GRN);
{const p=pt('D',1438,592);T.push(`<text x="${f(p[0]-3)}" y="${f(p[1])}" textLength="359" fill="#9aa0a8" font-size="55">New York</text>`)}
const rot=(t,x,y,a,w,s,c='#69757c',sz=23,o='')=>{const p=pt(t,x,y);T.push(`<text transform="translate(${f(p[0])} ${f(p[1])}) rotate(${a})" x="${-w/2}" y="${sz*.35}" textLength="${w}" fill="${c}" font-size="${sz}" ${o}>${s}</text>`)};
const LS='font-family="Liberation Sans" font-weight="700"';
rot('A',933,1057,-82,132,'NEW JERSEY','#8c8c8c',21.5,LS);rot('A',992,1068,-82,111,'NEW YORK','#8c8c8c',21.5,LS);
rot('A',233,1389,-83,86,'Greene St');rot('B',355,675,-83,79,'Varick St');rot('B',1303,225,-64,67,'3rd Ave');rot('E',483,97,-56,86,'Broadway');
rot('C',50,1161,21,118,'E Houston St');rot('E',1192,135,21.4,78,'Grand St');rot('E',985,452,-9,104,'E Broadway');
const BR='#6e3f13';rot('C',607,235,61,76,'FDR Dr',BR,25);rot('C',668,785,-65,77,'FDR Dr',BR,25);rot('F',377,565,-59,78,'FDR Dr',BR,25);rot('E',775,925,-26,76,'FDR Dr',BR,25);rot('D',1350,915,-70,84,'West St',BR,25);
rot('E',215,1287,-42,82,'Water St');rot('F',400,910,-31,108,'East River','#5b83c7',25);rot('F',1315,265,28.500,156,'Metropolitan Ave');rot('C',1510,625,-84,95,'Franklin St');

const M=['B601,252','B1088,294','B1176,348','B1387,63','C119,234','B373,486','B449,744','B962,732','B330,1041','B827,1065','B297,1371','B1026,1263','B1321,1410','E1024,33','E653,66','E200,393','E71,699','E152,732','E207,849','E316,837','E71,1068','E145,1122','D1468,999','D1387,1269','F1530,114','A318,633'];
const metro=M.map(s=>{const[x,y]=parse(s)[0];return `<g transform="translate(${f(x)} ${f(y)})"><rect x="-12.300" y="-12.300" width="24.600" height="24.600" rx="3" fill="#3a72e0" stroke="#2456c4" stroke-width="1.600"/><text text-anchor="middle" y="7.500" font-size="21" font-weight="700" fill="#fff" stroke="none">M</text></g>`}).join('');

const G={
 camera:'<path d="M-12 -3H-5L-3 -8H4L6 -5H12V11H-12ZM-11 -9V-3M-14 -6H-8" fill="#fff" stroke="#fff" stroke-width="1.200"/><circle cx="1" cy="3" r="4.500" fill="#51b1c8"/>',
 museum:'<path d="M-11 -3L0 -12L11 -3V0H9V9H11V11H-11V9H-9V0H-11Z" fill="#fff"/><path d="M-7 9V-2H7V9Z" fill="#51b1c8"/><path d="M-4.500 8V0L0 5L4.500 0V8" fill="none" stroke="#fff" stroke-width="2.200"/>',
 food:'<path d="M-8 -12V-5M-4.500 -12V-5M-1 -12V-5M-4.500 -5V12" stroke="#fff" stroke-width="2.600" fill="none"/><path d="M-9.200 -6H.2V-3Q-4.500 2 -9.200 -3ZM3 12V-7Q5 -13 9 -12V12H6V3Z" fill="#fff"/>',
 bag:'<path d="M-10 -4H10L12 11H-12Z" fill="#fff"/><path d="M-5 -3V-7Q-5 -12 0 -12Q5 -12 5 -7V-3" fill="none" stroke="#fff" stroke-width="2.400"/><path d="M-5 2Q0 9 5 2" fill="none" stroke="#5b8def" stroke-width="2"/>',
 cart:'<path d="M-12 -9H-8L-3 4H8L11 -5H-7" stroke="#fff" stroke-width="2.600" fill="none"/><path d="M-7 -6H11L8 1H-4Z" fill="#fff"/><circle cx="-4" cy="10" r="2.300" fill="#fff"/><circle cx="7" cy="10" r="2.300" fill="#fff"/>',
 tree:'<path d="M0 -13L6 -4H3L9 4H6L10 9H1.500V14H-1.500V9H-10L-6 4H-9L-3 -4H-6Z" fill="#fff"/>',
 bridge:'<path d="M-11 -12H-5V12H-13V7H-11ZM11 -12H5V12H13V7H11Z" fill="#fff"/><path d="M-14 3H14M-6 -8Q0 4 6 -8M0 -2V3" stroke="#fff" stroke-width="2" fill="none"/><path d="M-8 -4V12M8 -4V12" stroke="#7c8f9c" stroke-width="1"/>',
 castle:'<path d="M-9 -12H-5V-9H-2V-12H2V-9H5V-12H9V-5L7 -2H-7L-9 -5ZM-5 -1H5L6 6L11 10H-11L-6 6Z" fill="#fff"/>',
 tower:'<path d="M0 -13L2.500 -8L3.500 3H6V5L5 6V12H7V13H-7V12H-5V6L-6 5V3H-3.500L-2.500 -8Z" fill="#fff"/>',dot:'<circle r="7" fill="#fff"/>'};
const pin=(tile,x,top,c,s,g)=>{const p=pt(tile,x,top);return `<g transform="translate(${f(p[0])} ${f(p[1]+20)})" stroke-linejoin="round"><path d="M0 37.500C-1.600 26-6 20-12 13.500C-17 8.500-19.500 5-19.500 0A19.500 19.500 0 0 1 19.500 0C19.500 5 17 8.500 12 13.500C6 20 1.600 26 0 37.500Z" fill="${c}" stroke="${s}" stroke-width="1.300"/>${G[g]}</g>`};
const C1=['#51b1c8','#3f94a8'],C2=['#e39b33','#c9812a'],C3=['#7c8f9c','#61737f'],C4=['#5b8def','#4470d4'];
const pins=pin('B',784,757,...C1,'camera')+pin('B',1061,895,...C1,'museum')+pin('B',1216,1222,...C1,'museum')+pin('B',1364,904,...C2,'food')+pin('C',373,18,...C3,'dot')+pin('D',1343,373,...C4,'bag')+pin('A',192,-42,...C4,'bag')+pin('A',78,455,...C4,'bag')+pin('D',1162,993,...C1,'museum')+pin('D',313,438,...C1,'castle')+pin('D',254,783,...C1,'tower')+pin('E',841,984,...C3,'bridge')+pin('E',1178,855,...C3,'bridge')+pin('F',675,294,...C3,'bridge')+pin('F',926,174,'#55a557','#38853e','tree')+pin('F',1378,58,...C4,'cart')+pin('F',1480,472,...C2,'food')+pin('F',1223,633,...C2,'food')+pin('F',819,1308,...C3,'dot');

const mapSvg=()=>{
 const rd=ROADS.map(([w,s])=>[w,curve(s)]),ye=YELLOW.map(([w,s])=>[w,curve(s)]);
 const park=PARK.map(s=>area(s,'#cde6cb')).join('');
 const landD=LAND.map(s=>poly(s)+'Z').join('');
 const red=pt('E',786,195),tr=pt('D',390,165),n9=pt('B',81,249),i78=pt('B',252,985),sq=pt('D',14,178);
 return `<svg width="1932" height="944" viewBox="0 0 1932 944" font-family="Roboto,sans-serif">
 <defs><clipPath id="land"><path d="${landD}"/></clipPath></defs>
 <rect width="1932" height="944" fill="#b2d9fb"/>
 <g fill="none" stroke="#9bbdef" stroke-width="2.100" stroke-dasharray="14 6">${FERRY.map(s=>`<path d="${curve(s)}"/>`).join('')}</g>
 <path d="${curve('A1103,12 1005,666 920,1440 D915,0 865,500 800,1080 765,1434')}" fill="none" stroke="#9a958f" stroke-width="1.500" stroke-dasharray="4 4"/>
 <path d="${poly('D430,160 900,255 1185,325')}" stroke="#e9eef6" stroke-width="2" stroke-dasharray="60 8" fill="none"/><path d="${poly('D875,0 845,370 830,405')}" stroke="#9bbdef" stroke-width="1.500" fill="none"/>
 <path d="${landD}" fill="#e8e8e8"/>
 <g clip-path="url(#land)">${CREAM.map(s=>area(s,'#fdf5e0')).join('')}
 ${area('B750,500 800,420 940,490 900,560','#e9eaf0')}${area('B910,370 950,350 1010,400 960,460','#e9eaf0')}${area('C150,880 215,890 180,980 140,950','#e9eaf0')}${area('E620,150 670,180 610,290 580,260','#e9eaf0')}${area('E330,640 470,700 420,760','#e9eaf0')}${area('E540,650 620,640 620,690 560,740','#e9eaf0')}${area('C100,12 210,20 170,80 80,50','#f7e7e5')}${area('E1310,470 1385,475 1380,515 1305,522','#f7e7e5')}${area('E375,715 425,770 400,808 365,755','#f7e7e5')}
 ${park}${GRIDS.map(g=>grid(...g)).join('')}
 <g opacity=".93">${['B745,165 910,265 850,385 715,290','C135,570 255,630 185,800 70,715','E325,428 410,480 400,570 235,620','B1160,970 1185,990 1110,1270 1085,1275','B1055,1310 1090,1320 1065,1440 1040,1440','E640,225 695,240 690,310 680,400 640,370','E990,645 1040,650 1085,800 1000,820','F220,595 345,575 300,680 225,700','B800,475 885,545 860,590 775,535'].map(s=>area(s,'#cde6cb')).join('')}</g></g>
 <g fill="none" stroke="#f7f7f7" stroke-width="1.800">${['C240,300 270,260 320,250 370,290 380,380','C330,180 340,220 380,240 420,215 410,170','C475,300 480,240 520,225 550,250','C400,400 420,360 500,380 470,420 390,390','C430,1180 480,1060 520,900 560,870','C450,1200 520,1000 570,940','C380,1160 460,1190 520,1230','F350,130 345,80 400,0','F345,130 380,200 370,260','F190,60 210,10 240,30 230,70','E690,700 710,650 740,630 760,660 750,740','E760,690 770,780 780,830 870,810','E600,650 680,720 700,800','E1160,600 1200,620 1300,590 1400,600','E1270,620 1270,710 1295,710 1295,620','F110,440 110,650','F60,470 60,660','F180,430 180,640','F320,470 310,520 330,530'].map(s=>`<path d="${curve(s)}"/>`).join('')}</g>
 <g fill="none" stroke="#fff" stroke-width="2">${['C1270,830 1425,990','C1268,905 1390,1035','C1265,990 1350,1075','F720,985 762,1065 758,1200 780,1285 950,1400','F640,1090 765,1250','F120,1180 115,1330','F120,1268 290,1272 275,1400','F200,1220 200,1330','C640,180 612,182','C1180,225 1280,212','D200,180 330,200','D14,930 210,965','D60,945 45,1075 240,1110 250,1085','D210,1105 210,1155 260,1150'].map(s=>`<path d="${poly(s)}"/>`).join('')}</g>
 <g fill="none" stroke="#7fc180" stroke-width="1.300">${['D14,835 85,850 225,882 280,905 262,1180 60,1145 14,1175','D235,885 228,960 275,950','D65,940 275,980','D14,1110 50,1095 75,1120 70,1145'].map(s=>`<path d="${poly(s)}"/>`).join('')}</g>
 <g fill="none" stroke-linecap="round" stroke-linejoin="round">
 ${rd.map(([w,d])=>`<path d="${d}" stroke="#d3d4d8" stroke-width="${w+1.6}"/>`).join('')}${rd.map(([w,d])=>`<path d="${d}" stroke="#fff" stroke-width="${w}"/>`).join('')}
 ${GREYRD.map(([w,s])=>`<path d="${curve(s)}" stroke="#d3d4d8" stroke-width="${w}"/>${w>5?`<path d="${curve(s)}" stroke="#e1e1e1" stroke-width="${w-3}"/>`:''}`).join('')}
 ${ye.map(([w,d])=>`<path d="${d}" stroke="#f1cc6b" stroke-width="${w+1.5}"/>`).join('')}${ye.map(([w,d])=>`<path d="${d}" stroke="#fee9a9" stroke-width="${w-2}"/>`).join('')}
 <path d="${curve(YELLOW[0][1])}" stroke="#f5d988" stroke-width="1.500"/><path d="${curve(YELLOW[4][1])}" stroke="#f1cc6b" stroke-width="1.500"/></g>
 ${metro}
 <g transform="translate(${f(tr[0])} ${f(tr[1])})"><rect x="-12.500" y="-12.500" width="25" height="25" rx="3" fill="#3a72e0" stroke="#2456c4" stroke-width="1.600"/><path d="M-7 -5Q-7 -9 0 -9Q7 -9 7 -5V5L4 6L6 9H3L1 7H-1L-3 9H-6L-4 6L-7 5Z" fill="#fff"/><path d="M-5 -5H-1V-1H-5ZM1 -5H5V-1H1Z" fill="#3a72e0"/></g>
 <rect x="${f(sq[0]-10)}" y="${f(sq[1])}" width="16" height="22" fill="#fff" stroke="#555" stroke-width="1.600"/>
 <g transform="translate(${f(n9[0])} ${f(n9[1])})"><rect x="-16.500" y="-13.500" width="33" height="27" rx="12" fill="#fff" stroke="#555" stroke-width="1.800"/><text text-anchor="middle" y="6.500" font-size="18" fill="#333">9A</text></g>
 <g transform="translate(${f(i78[0])} ${f(i78[1])})"><path d="M-15 -9V0Q-14 11 0 16Q14 11 15 0V-9Z" fill="#4a78c0"/><path d="M-14 -10L-13 -16Q-6 -13 0 -17Q6 -13 13 -16L14 -10Z" fill="#c4605c"/><text text-anchor="middle" y="8" font-size="18" font-weight="500" fill="#fff">78</text></g>
 ${pins}
 <g stroke="#fff" stroke-opacity=".8" stroke-width="4.500" stroke-linejoin="round" paint-order="stroke">${T.map(t=>t.replace('<text','<text paint-order="stroke"')).join('')}</g>
 <g transform="translate(${f(red[0])} ${f(red[1]+26)})"><path d="M0 47C-2 33-8 26-15 17.500C-21 11-25 6-25 0A25 25 0 0 1 25 0C25 6 21 11 15 17.500C8 26 2 33 0 47Z" fill="#d9503f" stroke="#b03527" stroke-width="1.500"/><circle r="10" fill="#a5281e"/></g>
 </svg>`};

make('map-card',`<style>:host{display:flex;justify-content:space-between;box-sizing:border-box;width:604px;height:198px;padding:21px 40px 0 24px;background:#fff;border-radius:4px;box-shadow:0 2px 6px rgba(0,0,0,.3);font:400 24px/28px Roboto,sans-serif;color:#5b5b5b}
h2{margin:0 0 11px;font:500 28px/32px Roboto,sans-serif;color:#000}.a{color:#3873dd}.lnk{margin-top:30px}.dir{display:flex;flex-direction:column;align-items:center;padding-top:7px}.dir svg{margin-bottom:10px}</style>
<div><h2><fit-text w="158">13 Doyers St</fit-text></h2><div><fit-text w="367">13 Doyers St, New York, NY 10013,</fit-text></div><div>USA</div><div class="a lnk"><fit-text w="172">View larger map</fit-text></div></div>
<div class="dir"><svg width="38" height="36" viewBox="0 0 38 36"><path d="M0 6L6 0L20 14V20L14 19Z" fill="#bccffa"/><path d="M21 0H37V17L32 12Q22 20 22 25V36H14V25Q14 16 26 6Z" fill="#6d97f3"/></svg><span class="a"><fit-text w="107">Directions</fit-text></span></div>`);

make('map-view',()=>`<style>:host{display:block;position:relative;width:1932px;height:944px;overflow:hidden}svg{display:block}map-card{position:absolute;left:20px;top:20px}</style>${mapSvg()}<map-card></map-card>`);

make('contact-page',`<style>:host{display:block;position:relative;width:3584px;height:1968px;overflow:hidden;border-radius:0 0 22px 22px;background:#1e1d1b}
.bg{position:absolute;inset:0}
.content{position:relative;display:flex;flex-direction:column}
.row{display:flex;width:2640px;margin:0 auto;height:832px}
.col{width:1052px;padding:0 134px}
.info{display:flex;flex-direction:column;gap:48px;padding-top:147px}
.info contact-line:first-child{margin-bottom:16px}
form.col{padding-top:96px}
submit-button{margin:32px auto 0}
map-view{margin:0 auto}
.frame{position:absolute;inset:0;border:2px solid rgba(255,255,255,.22);border-top:0;border-radius:0 0 22px 22px}</style>
<svg class="bg" width="3584" height="1968"><path d="M0 192H1097L72 1968H0Z" fill="#1d1917"/><path d="M3584 983V1968H3008L3181 1668Z" fill="#232323"/></svg>
<div class="content"><top-nav></top-nav>
<div class="row"><div class="col info">
<contact-line icon="phone">070 2230 8453</contact-line><contact-line icon="mail">help@topchef.co.uk</contact-line>
<contact-line icon="clock" track=".13">Tues, Weds, Thurs, Fri, Sat, Sun, 2pm-11pm</contact-line><contact-line icon="pin" track=".12">13 Doyers St, New York, NY 10013, USA</contact-line></div>
<form class="col"><form-field><fit-text w="153">Full Name</fit-text></form-field><form-field><fit-text w="85">Email</fit-text></form-field><form-field area><fit-text w="216">Your message</fit-text></form-field>
<submit-button><fit-text w="256">Submit Message</fit-text></submit-button></form></div>
<map-view></map-view></div><div class="frame"></div>`);
</script>
</body>
</html>
